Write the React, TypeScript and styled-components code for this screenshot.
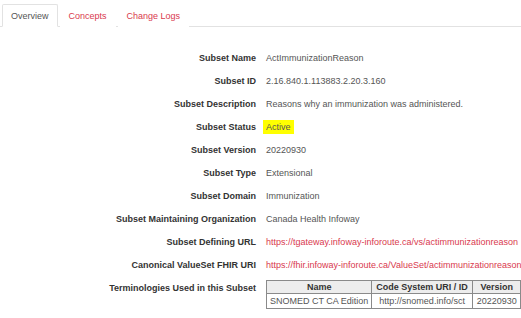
import React from "react";
import styled, { createGlobalStyle } from "styled-components";

const Global = createGlobalStyle`
  html, body { margin: 0; padding: 0; background: #fff; }
  body { font-family: "Liberation Sans", Arial, sans-serif; font-size: 9px; color: #333; }
`;

const Page = styled.div`
  width: 521px;
  height: 318px;
  overflow: hidden;
  background: #fff;
`;

const Tabs = styled.ul`
  list-style: none;
  margin: 0;
  padding: 4px 0 0 2px;
  display: flex;
  border-bottom: 1px solid #e2e2e2;
`;

const Tab = styled.li<{ $active?: boolean }>`
  height: 23px;
  line-height: 22px;
  padding: 0 8px;
  margin-right: 2px;
  margin-bottom: -1px;
  font-size: 9px;
  border: 1px solid ${(p) => (p.$active ? "#e2e2e2" : "transparent")};
  border-bottom-color: ${(p) => (p.$active ? "#fff" : "transparent")};
  border-radius: 2px 2px 0 0;
  background: #fff;
  color: ${(p) => (p.$active ? "#555" : "#d9394e")};
  box-sizing: border-box;
`;

const Details = styled.div`
  display: grid;
  grid-template-columns: 256px auto;
  column-gap: 10px;
  margin-top: 20px;
`;

const Label = styled.div`
  text-align: right;
  font-weight: bold;
  color: #333;
  line-height: 23px;
  height: 23px;
  white-space: nowrap;
`;

const Value = styled.div`
  color: #555;
  line-height: 23px;
  height: 23px;
  white-space: nowrap;
`;

const Link = styled.a`
  color: #d9394e;
  text-decoration: none;
`;

const Highlight = styled.span`
  background: #ffff00;
  padding: 2px 3px;
  margin-left: -3px;
`;

const Table = styled.table`
  border-collapse: collapse;
  margin-top: 3px;
  font-size: 9px;
`;

const Th = styled.th<{ $w: number }>`
  width: ${(p) => p.$w}px;
  height: 13px;
  padding: 0 3px;
  background: #ededed;
  border: 1px solid #8a8a8a;
  color: #333;
  font-weight: bold;
  text-align: center;
  white-space: nowrap;
  line-height: 12px;
  box-sizing: border-box;
`;

const Td = styled.td`
  height: 14px;
  padding: 0 3px;
  border: 1px solid #8a8a8a;
  color: #555;
  text-align: center;
  white-space: nowrap;
  line-height: 13px;
`;

const rows: { label: string; value: React.ReactNode }[] = [
  { label: "Subset Name", value: "ActImmunizationReason" },
  { label: "Subset ID", value: "2.16.840.1.113883.2.20.3.160" },
  { label: "Subset Description", value: "Reasons why an immunization was administered." },
  { label: "Subset Status", value: <Highlight>Active</Highlight> },
  { label: "Subset Version", value: "20220930" },
  { label: "Subset Type", value: "Extensional" },
  { label: "Subset Domain", value: "Immunization" },
  { label: "Subset Maintaining Organization", value: "Canada Health Infoway" },
  {
    label: "Subset Defining URL",
    value: <Link>https://tgateway.infoway-inforoute.ca/vs/actimmunizationreason</Link>,
  },
  {
    label: "Canonical ValueSet FHIR URI",
    value: <Link>https://fhir.infoway-inforoute.ca/ValueSet/actimmunizationreason</Link>,
  },
];

export default function App() {
  return (
    <Page>
      <Global />
      <Tabs>
        <Tab $active>Overview</Tab>
        <Tab>Concepts</Tab>
        <Tab>Change Logs</Tab>
      </Tabs>
      <Details>
        {rows.map((r) => (
          <React.Fragment key={r.label}>
            <Label>{r.label}</Label>
            <Value>{r.value}</Value>
          </React.Fragment>
        ))}
        <Label>Terminologies Used in this Subset</Label>
        <div>
          <Table>
            <thead>
              <tr>
                <Th $w={102}>Name</Th>
                <Th $w={101}>Code System URI / ID</Th>
                <Th $w={49}>Version</Th>
              </tr>
            </thead>
            <tbody>
              <tr>
                <Td>SNOMED CT CA Edition</Td>
                <Td>http://snomed.info/sct</Td>
                <Td>20220930</Td>
              </tr>
            </tbody>
          </Table>
        </div>
      </Details>
    </Page>
  );
}
